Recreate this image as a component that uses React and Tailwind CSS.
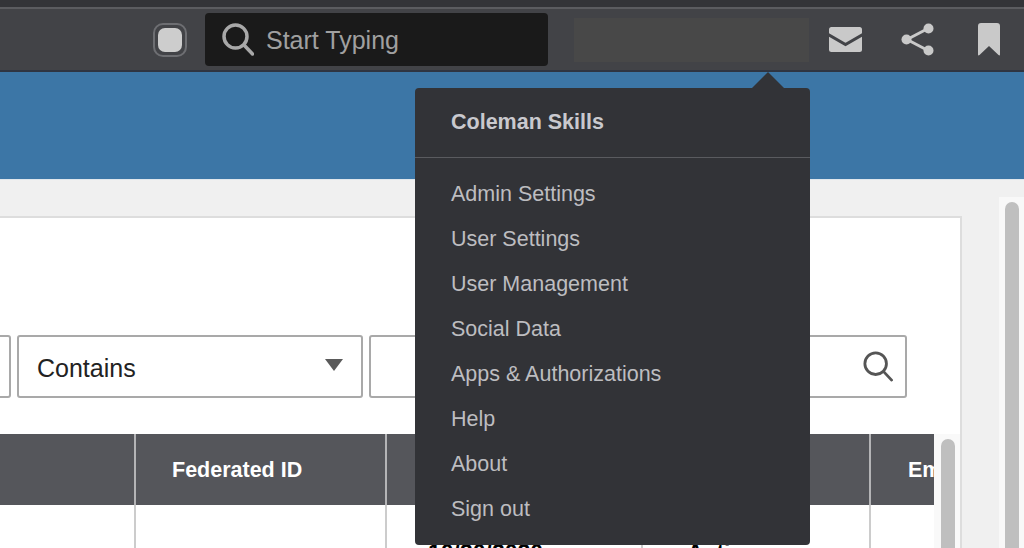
import React from 'react'

const menuItems = [
	'Admin Settings',
	'User Settings',
	'User Management',
	'Social Data',
	'Apps & Authorizations',
	'Help',
	'About',
	'Sign out',
]

function SearchIcon({ className, color, width = 3.5 }) {
	return (
		<svg viewBox="0 0 32 33" className={className} fill="none" stroke={color} strokeWidth={width} strokeLinecap="round">
			<circle cx="13.5" cy="13.5" r="11.5" />
			<line x1="22" y1="22" x2="30.5" y2="31" />
		</svg>
	)
}

function TopBar() {
	return (
		<div className="h-[72px] shrink-0 bg-[#424347] border-t-[7px] border-[#333438]">
			<div className="h-[65px] border-t-2 border-b-2 border-t-[#5b5c60] border-b-[#2f3542] flex items-center justify-end pr-6">
				<div className="w-[34px] h-[34px] rounded-[10px] border-2 border-[#6d6e72] flex items-center justify-center mr-[18px]">
					<div className="w-[24px] h-[24px] rounded-[7px] bg-[#cdcdcd]" />
				</div>
				<div className="w-[343px] h-[53px] rounded-[4px] bg-[#1a1a1a] flex items-center pl-[17px] gap-[12px] mr-[26px]">
					<SearchIcon className="w-[32px] h-[33px]" color="#a8a8a8" />
					<span className="text-[25px] text-[#a0a0a0] pt-[2px]">Start Typing</span>
				</div>
				<div className="w-[235px] h-[44px] bg-[#484848] mr-[20px]" />
				<svg viewBox="0 0 33 25" className="w-[33px] h-[25px] mr-[39px]">
					<rect width="33" height="25" rx="2.5" fill="#c9c9c9" />
					<path d="M-1 7.5 L16.5 17.5 L34 7.5" fill="none" stroke="#424347" strokeWidth="3" />
				</svg>
				<svg viewBox="0 0 33 33" className="w-[33px] h-[33px] mr-[44px]">
					<line x1="27" y1="5.5" x2="6" y2="16.5" stroke="#c9c9c9" strokeWidth="3" />
					<line x1="27" y1="27.5" x2="6" y2="16.5" stroke="#c9c9c9" strokeWidth="3" />
					<circle cx="27.5" cy="5.5" r="5" fill="#c9c9c9" />
					<circle cx="5.5" cy="16.5" r="5" fill="#c9c9c9" />
					<circle cx="27.5" cy="27.5" r="5" fill="#c9c9c9" />
				</svg>
				<svg viewBox="0 0 22 33" className="w-[22px] h-[33px]">
					<path d="M3 0 H19 Q22 0 22 3 V31.5 Q22 33 20.5 32 L11 23 L1.5 32 Q0 33 0 31.5 V3 Q0 0 3 0 Z" fill="#c9c9c9" />
				</svg>
			</div>
		</div>
	)
}

function UserMenu() {
	return (
		<div className="absolute left-[415px] top-[88px] w-[395px] h-[457px] rounded-[4px] bg-[#323337]">
			{/* arrow */}
			<div className="absolute left-[337px] top-[-16px] w-0 h-0 border-l-[16px] border-r-[16px] border-b-[16px] border-l-transparent border-r-transparent border-b-[#323337]" />
			<div className="h-[70px] border-b border-[#5a5b5f] flex items-center pl-9 text-[21.5px] font-bold text-[#c9c9ce]">
				Coleman Skills
			</div>
			<div className="pt-[14px] flex flex-col">
				{menuItems.map((item) => (
					<div key={item} className="h-[45px] flex items-center pl-9 text-[21.5px] text-[#bdbdc0]">
						{item}
					</div>
				))}
			</div>
		</div>
	)
}

function Filters() {
	return (
		<div className="h-[63px] flex justify-end gap-[6px] pr-[53px]">
			<div className="w-[40px] shrink-0 rounded-[3px] border-2 border-[#a9a9a9]" />
			<div className="w-[346px] shrink-0 rounded-[3px] border-2 border-[#a9a9a9] flex items-center justify-between pl-[18px] pr-[18px] pt-[4px] text-[25px] text-[#222]">
				<span>Contains</span>
				<div className="w-0 h-0 border-l-[9.5px] border-r-[9.5px] border-t-[12px] border-l-transparent border-r-transparent border-t-[#5a5a5a] mb-[8px]" />
			</div>
			<div className="w-[538px] shrink-0 rounded-[3px] border-2 border-[#a9a9a9] flex items-center justify-end pr-[12px]">
				<SearchIcon className="w-[30px] h-[31px]" color="#555555" width="3" />
			</div>
		</div>
	)
}

function UserTable() {
	const head = 'h-[71px] bg-[#55565b] flex items-center pl-[36px] pt-[2px] text-[21.5px] font-bold text-white whitespace-nowrap border-r-2 border-[#b4b4b6]'
	const cell = 'h-[60px] pt-[35px] pl-[36px] text-[23px] leading-[26px] font-bold text-black whitespace-nowrap border-r-2 border-[#cccccc]'
	return (
		<div className="flex">
			<div className="w-[934px] overflow-hidden grid grid-cols-[136px_251px_256px_228px_100px] content-start">
				<div className={head} />
				<div className={head}>Federated ID</div>
				<div className={head} />
				<div className={head} />
				<div className={head + ' pl-[37px]'}>Email</div>
				<div className={cell} />
				<div className={cell} />
				<div className={cell + ' pl-[41px]'}>10/30/2020</div>
				<div className={cell + ' pl-[44px]'}>Active</div>
				<div className={cell} />
			</div>
			<div className="w-[26px] bg-[#f9f9f9] pl-[7px]">
				<div className="w-[14px] h-[200px] mt-[5px] rounded-t-full bg-[#bfbfbf]" />
			</div>
		</div>
	)
}

export default function App() {
	return (
		<div className="relative w-[1024px] h-[548px] overflow-hidden flex flex-col bg-[#f0f0f0] font-['Liberation_Sans',Arial,sans-serif]">
			<TopBar />
			<div className="h-[107px] shrink-0 bg-[#3c76a6]" />
			<div className="flex-1 flex min-h-0 border-t border-[#dfe6ec]">
				<div className="w-[962px] shrink-0 mt-[36px] bg-white border-t-2 border-r-2 border-[#dddddd] overflow-hidden pt-[117px]">
					<Filters />
					<div className="mt-[36px]">
						<UserTable />
					</div>
				</div>
				<div className="w-[25px] ml-[37px] mt-[17px] bg-[#f8f8f8] pl-[6px]">
					<div className="w-[14px] h-[400px] mt-[5px] rounded-t-full bg-[#bfbfbf]" />
				</div>
			</div>
			<UserMenu />
		</div>
	)
}
